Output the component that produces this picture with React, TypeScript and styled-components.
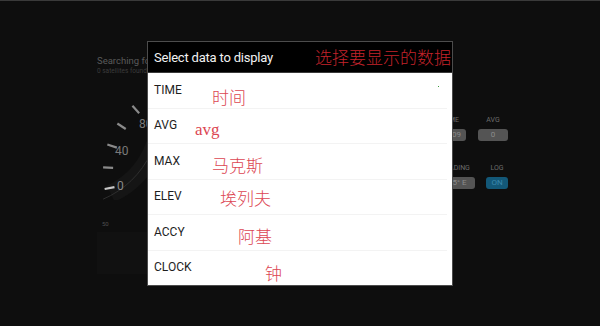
import React from "react";
import styled, { createGlobalStyle } from "styled-components";

const GlobalStyle = createGlobalStyle`
  html, body {
    margin: 0;
    padding: 0;
    background: #0e0e0e;
  }
  * {
    box-sizing: border-box;
  }
`;

const Screen = styled.div`
  position: relative;
  width: 600px;
  height: 326px;
  background: #0e0e0e;
  border-top: 1px solid #3a3a3a;
  overflow: hidden;
  display: flex;
  font-family: Roboto, "Liberation Sans", sans-serif;
`;

const LeftPanel = styled.div`
  width: 435px;
  padding: 54px 0 0 97px;
  display: flex;
  flex-direction: column;
  align-items: flex-start;
`;

const StatusTitle = styled.div`
  font-size: 9.5px;
  line-height: 12px;
  color: #5a5a5a;
  white-space: nowrap;
`;

const StatusSub = styled.div`
  font-size: 6.5px;
  line-height: 9px;
  color: #3c3c3c;
  white-space: nowrap;
`;

const GaugeSvg = styled.svg`
  display: block;
  margin-top: 12px;
`;

const ScaleLabel = styled.div`
  margin: 20px 0 0 5px;
  font-size: 6px;
  line-height: 8px;
  color: #4e4e4e;
`;

const FaintBox = styled.div`
  margin-top: 4px;
  width: 54px;
  height: 42px;
  background: #111111;
`;

const RightPanel = styled.div`
  padding-top: 115px;
  display: flex;
  flex-direction: column;
  gap: 23px;
`;

const StatRow = styled.div<{ $gap: number; $indent: number }>`
  display: flex;
  gap: ${({ $gap }) => $gap}px;
  margin-left: ${({ $indent }) => $indent}px;
`;

const Stat = styled.div<{ $w: number }>`
  width: ${({ $w }) => $w}px;
  display: flex;
  flex-direction: column;
  align-items: center;
  gap: 4px;
`;

const StatLabel = styled.div`
  font-size: 7px;
  line-height: 9px;
  color: #6c6c6c;
  white-space: nowrap;
`;

const StatValue = styled.div<{ $on?: boolean }>`
  width: 100%;
  height: 12px;
  border-radius: 3px;
  background: ${({ $on }) => ($on ? "#135878" : "#545454")};
  color: ${({ $on }) => ($on ? "#3b88ad" : "#8c8c8c")};
  font-size: 8px;
  line-height: 12px;
  text-align: center;
  white-space: nowrap;
`;

const Dialog = styled.div`
  position: absolute;
  left: 147px;
  top: 40px;
  width: 306px;
  height: 245px;
  border: 1px solid #4c4c4c;
  background: #ffffff;
  display: flex;
  flex-direction: column;
`;

const DialogHeader = styled.div`
  height: 31px;
  background: #000000;
  border-bottom: 1px solid #3a3a3a;
  display: flex;
  align-items: center;
  justify-content: space-between;
  padding: 0 1px 0 6px;
`;

const DialogTitle = styled.div`
  font-size: 13px;
  color: #f2f2f2;
  letter-spacing: -0.2px;
  white-space: nowrap;
`;

const TitleNote = styled.div`
  font-family: "Noto Sans CJK SC", sans-serif;
  font-size: 17px;
  line-height: 20px;
  font-weight: 300;
  color: #c3232b;
  white-space: nowrap;
`;

const OptionList = styled.div`
  flex: 1;
  display: flex;
  flex-direction: column;
`;

const OptionRow = styled.div`
  position: relative;
  flex: 1;
  display: flex;
  align-items: center;
  padding-left: 6px;
  margin-right: 5px;
  border-bottom: 1px solid #f3f3f3;

  &:last-child {
    border-bottom: 0;
  }
`;

const OptionLabel = styled.div`
  font-size: 12px;
  color: #1e1e1e;
  margin-top: -1px;
`;

const Note = styled.div<{ $x: number; $y: number; $serif?: boolean }>`
  position: absolute;
  left: ${({ $x }) => $x}px;
  top: ${({ $y }) => $y}px;
  font-family: ${({ $serif }) =>
    $serif ? '"Liberation Serif", serif' : '"Noto Sans CJK SC", sans-serif'};
  font-size: 17px;
  line-height: 20px;
  font-weight: 300;
  color: #dc4652;
  white-space: nowrap;
`;

const GreenDot = styled.div`
  position: absolute;
  right: 8px;
  top: 13px;
  width: 1px;
  height: 1px;
  background: #3a9a3a;
`;

const options = [
  { key: "TIME", note: "时间", x: 64, y: 14 },
  { key: "AVG", note: "avg", x: 47, y: 11, serif: true },
  { key: "MAX", note: "马克斯", x: 64, y: 11 },
  { key: "ELEV", note: "埃列夫", x: 72, y: 8 },
  { key: "ACCY", note: "阿基", x: 90, y: 11 },
  { key: "CLOCK", note: "钟", x: 117, y: 12 },
];

// gauge ticks: angle in degrees, centre at (95, 84)
const ticks = [228, 213, 198, 183, 169];

const Gauge: React.FC = () => {
  const cx = 95;
  const cy = 84;
  const arc = (r: number, a0: number, a1: number) => {
    const p = (a: number) => [
      cx + r * Math.cos((a * Math.PI) / 180),
      cy + r * Math.sin((a * Math.PI) / 180),
    ];
    const [x0, y0] = p(a0);
    const [x1, y1] = p(a1);
    return `M ${x0} ${y0} A ${r} ${r} 0 0 0 ${x1} ${y1}`;
  };
  return (
    <GaugeSvg width="110" height="112" viewBox="0 0 110 112">
      <path d={arc(84, 165, 245)} stroke="#151515" strokeWidth="18" fill="none" />
      <path d={arc(93, 163, 247)} stroke="#2e2e2e" strokeWidth="1" fill="none" />
      {ticks.map((a, i) => {
        const r0 = 79;
        const r1 = 89;
        const c = Math.cos((a * Math.PI) / 180);
        const s = Math.sin((a * Math.PI) / 180);
        return (
          <line
            key={a}
            x1={cx + r0 * c}
            y1={cy + r0 * s}
            x2={cx + r1 * c}
            y2={cy + r1 * s}
            stroke={i === ticks.length - 1 ? "#c8c8c8" : "#8a8a8a"}
            strokeWidth="2.2"
          />
        );
      })}
      <text x="42" y="40" fill="#7a7a7a" fontSize="12" fontFamily="Roboto, sans-serif">80</text>
      <text x="18" y="67" fill="#7a7a7a" fontSize="12" fontFamily="Roboto, sans-serif">40</text>
      <text x="20" y="102" fill="#8a8a8a" fontSize="12" fontFamily="Roboto, sans-serif">0</text>
    </GaugeSvg>
  );
};

const App: React.FC = () => {
  return (
    <>
      <GlobalStyle />
      <Screen>
        <LeftPanel>
          <StatusTitle>Searching for GPS signal</StatusTitle>
          <StatusSub>0 satellites found</StatusSub>
          <Gauge />
          <ScaleLabel>50</ScaleLabel>
          <FaintBox />
        </LeftPanel>
        <RightPanel>
          <StatRow $gap={12} $indent={1}>
            <Stat $w={30}>
              <StatLabel>TIME</StatLabel>
              <StatValue>00:09</StatValue>
            </Stat>
            <Stat $w={30}>
              <StatLabel>AVG</StatLabel>
              <StatValue>0</StatValue>
            </Stat>
          </StatRow>
          <StatRow $gap={11} $indent={0}>
            <Stat $w={40}>
              <StatLabel>HEADING</StatLabel>
              <StatValue>135° E</StatValue>
            </Stat>
            <Stat $w={22}>
              <StatLabel>LOG</StatLabel>
              <StatValue $on>ON</StatValue>
            </Stat>
          </StatRow>
        </RightPanel>

        <Dialog>
          <DialogHeader>
            <DialogTitle>Select data to display</DialogTitle>
            <TitleNote>选择要显示的数据</TitleNote>
          </DialogHeader>
          <OptionList>
            {options.map((o, i) => (
              <OptionRow key={o.key}>
                <OptionLabel>{o.key}</OptionLabel>
                <Note $x={o.x} $y={o.y} $serif={o.serif}>
                  {o.note}
                </Note>
                {i === 0 && <GreenDot />}
              </OptionRow>
            ))}
          </OptionList>
        </Dialog>
      </Screen>
    </>
  );
};

export default App;
